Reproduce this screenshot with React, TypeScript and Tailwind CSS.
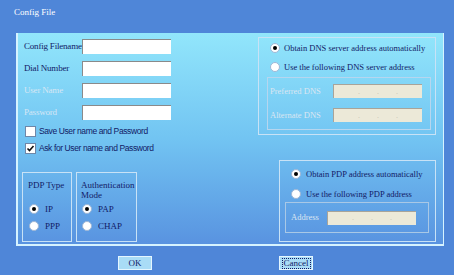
function Radio({ checked }: { checked?: boolean }) {
  return (
    <span className="flex h-[10px] w-[10px] shrink-0 items-center justify-center rounded-full border border-[#9fb7d6] bg-white">
      {checked && <span className="h-[4px] w-[4px] rounded-full bg-black" />}
    </span>
  );
}

function Check({ checked }: { checked?: boolean }) {
  return (
    <span className="flex h-[11px] w-[11px] shrink-0 items-center justify-center border border-[#6f87a8] bg-white">
      {checked && (
        <svg width="9" height="9" viewBox="0 0 9 9">
          <path d="M1.5 4.5 L3.5 6.5 L7.5 2" stroke="#111" strokeWidth="1.6" fill="none" />
        </svg>
      )}
    </span>
  );
}

function TextRow({ label, disabled }: { label: string; disabled?: boolean }) {
  return (
    <div className="flex h-[15px] items-center">
      <span
        className={
          "w-[64px] whitespace-nowrap pl-[6px] text-[9px] leading-none tracking-[-0.2px] " +
          (disabled ? "text-[#d6e6f4]" : "text-[#121a66]")
        }
      >
        {label}
      </span>
      <span className="h-[15px] w-[89px] border-t border-l border-[#8a8a8a] bg-white" />
    </div>
  );
}

function IpRow({ label, w }: { label: string; w: string }) {
  return (
    <div className="flex h-[14px] items-center">
      <span className={"whitespace-nowrap text-[8.5px] leading-none text-[#dbe6f2] " + w}>{label}</span>
      <span className="flex h-[14px] w-[89px] items-center justify-center gap-[17px] border-t border-l border-[#a8a49a] bg-[#ece9d8] text-[8px] leading-none text-[#c4c0b2]">
        <span>.</span>
        <span>.</span>
        <span>.</span>
      </span>
    </div>
  );
}

export default function App() {
  return (
    <div
      className="h-[275px] w-[454px] overflow-hidden bg-[#4f86d8]"
      style={{ fontFamily: '"Liberation Serif", serif' }}
    >
      <div className="h-[33px] pt-[8px] pl-[14px] text-[9px] leading-none text-white">Config File</div>

      <div className="ml-[16px] flex h-[213px] w-[428px] border-b-2 border-l-2 border-r border-[#d6f3ff] bg-gradient-to-b from-[#92e6fb] via-[#72c4f2] to-[#5993e0]">
        {/* left column */}
        <div className="flex w-[240px] flex-col pt-[6px]">
          <div className="flex flex-col gap-[7px]">
            <TextRow label="Config Filename" />
            <TextRow label="Dial Number" />
            <TextRow label="User Name" disabled />
            <TextRow label="Password" disabled />
          </div>
          <div
            className="mt-[5px] flex flex-col gap-[5px] pl-[7px] text-[8.5px] leading-none tracking-[-0.4px] text-[#121a66]"
            style={{ fontFamily: '"Liberation Sans", Arial, sans-serif' }}
          >
            <div className="flex h-[12px] items-center gap-[3px]">
              <Check />
              <span>Save User name and Password</span>
            </div>
            <div className="flex h-[12px] items-center gap-[3px]">
              <Check checked />
              <span>Ask for User name and Password</span>
            </div>
          </div>
          <div className="mt-[18px] flex gap-[4px] pl-[4px] text-[9px] leading-[10px] text-[#121a66]">
            <div className="flex h-[70px] w-[50px] flex-col border border-[#c8e2f6] pt-[7px] pl-[5px]">
              <span>PDP Type</span>
              <div className="mt-[14px] flex items-center gap-[6px] pl-[1px]">
                <Radio checked />
                <span>IP</span>
              </div>
              <div className="mt-[7px] flex items-center gap-[6px] pl-[1px]">
                <Radio />
                <span>PPP</span>
              </div>
            </div>
            <div className="flex h-[70px] w-[61px] flex-col border border-[#c8e2f6] pt-[7px] pl-[4px]">
              <span>Authentication</span>
              <span>Mode</span>
              <div className="mt-[4px] flex items-center gap-[6px] pl-[1px]">
                <Radio checked />
                <span>PAP</span>
              </div>
              <div className="mt-[7px] flex items-center gap-[6px] pl-[1px]">
                <Radio />
                <span>CHAP</span>
              </div>
            </div>
          </div>
        </div>

        {/* right column */}
        <div className="flex w-[178px] flex-col items-end pt-[4px] text-[8.5px] leading-none text-[#121a66]">
          <div className="flex h-[98px] w-[178px] flex-col border border-[#c8e2f6] pt-[5px]">
            <div className="flex h-[10px] items-center gap-[4px] pl-[11px]">
              <Radio checked />
              <span>Obtain DNS server address automatically</span>
            </div>
            <div className="mt-[9px] flex h-[10px] items-center gap-[4px] pl-[11px]">
              <Radio />
              <span>Use the following DNS server address</span>
            </div>
            <div className="mt-[5px] ml-[8px] flex h-[53px] w-[164px] flex-col gap-[10px] border border-[#b6d6ef] pt-[6px] pl-[2px]">
              <IpRow label="Preferred DNS" w="w-[63px]" />
              <IpRow label="Alternate DNS" w="w-[63px]" />
            </div>
          </div>

          <div className="mt-[25px] flex h-[82px] w-[157px] flex-col border border-[#c8e2f6] pt-[8px]">
            <div className="flex h-[10px] items-center gap-[5px] pl-[11px]">
              <Radio checked />
              <span>Obtain PDP address automatically</span>
            </div>
            <div className="mt-[10px] flex h-[10px] items-center gap-[5px] pl-[11px]">
              <Radio />
              <span>Use the following PDP address</span>
            </div>
            <div className="mt-[3px] ml-[5px] flex h-[31px] w-[144px] items-center border border-[#a9c8e6] pl-[5px]">
              <IpRow label="Address" w="w-[36px]" />
            </div>
          </div>
        </div>
      </div>

      <div className="flex pt-[10px] text-[9px] leading-none text-[#121a66]">
        <div className="ml-[118px] flex h-[14px] w-[34px] items-center justify-center border border-[#e4f6ff] bg-[#a9dcf6]">
          OK
        </div>
        <div className="ml-[127px] flex h-[14px] w-[34px] items-center justify-center border border-[#e4f6ff] bg-[#a9dcf6]">
          <span className="px-[1px] outline outline-1 outline-dotted outline-[#121a66]">Cancel</span>
        </div>
      </div>
    </div>
  );
}
